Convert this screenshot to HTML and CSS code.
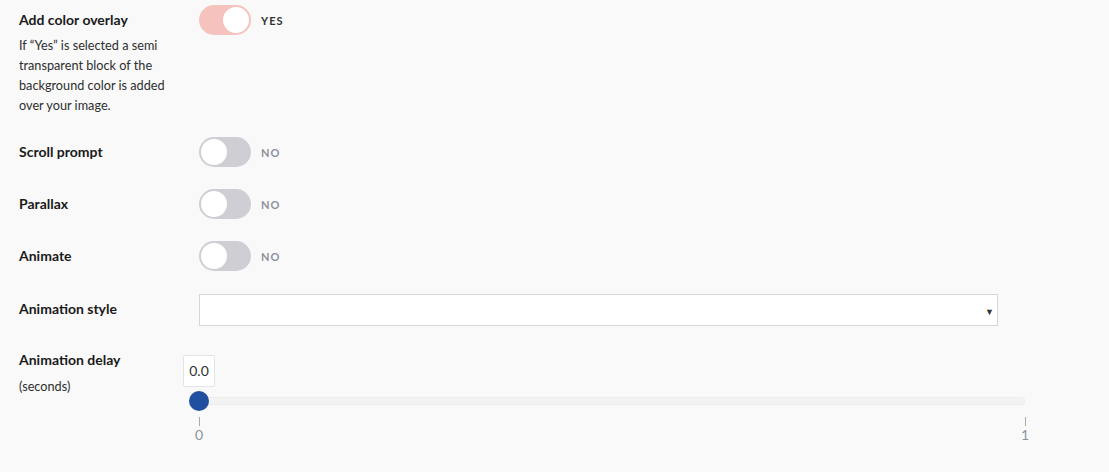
FILE: index.html
```html
<!DOCTYPE html>
<html>
<head>
<meta charset="utf-8">
<link rel="stylesheet" href="styles.css">
</head>
<body>
<div class="form">
  <div class="row row-first">
    <div class="label">
      <div class="title">Add color overlay</div>
      <div class="desc">If “Yes” is selected a semi transparent block of the background color is added over your image.</div>
    </div>
    <div class="control">
      <span class="toggle on"><span class="knob"></span></span>
      <span class="state state-on">YES</span>
    </div>
  </div>
  <div class="row">
    <div class="label"><div class="title">Scroll prompt</div></div>
    <div class="control">
      <span class="toggle"><span class="knob"></span></span>
      <span class="state">NO</span>
    </div>
  </div>
  <div class="row">
    <div class="label"><div class="title">Parallax</div></div>
    <div class="control">
      <span class="toggle"><span class="knob"></span></span>
      <span class="state">NO</span>
    </div>
  </div>
  <div class="row">
    <div class="label"><div class="title">Animate</div></div>
    <div class="control">
      <span class="toggle"><span class="knob"></span></span>
      <span class="state">NO</span>
    </div>
  </div>
  <div class="row row-select">
    <div class="label"><div class="title">Animation style</div></div>
    <div class="control">
      <div class="select"><span class="arrow">▼</span></div>
    </div>
  </div>
  <div class="row row-slider">
    <div class="label">
      <div class="title">Animation delay</div>
      <div class="sub">(seconds)</div>
    </div>
    <div class="control slider-col">
      <div class="slider">
        <div class="track"></div>
        <div class="bubble">0.0</div>
        <div class="handle"></div>
      </div>
      <div class="ticks">
        <div class="tick"><span class="tick-line"></span><span class="tick-label">0</span></div>
        <div class="tick"><span class="tick-line"></span><span class="tick-label">1</span></div>
      </div>
    </div>
  </div>
</div>
</body>
</html>
```

FILE: styles.css
```css
html, body {
  margin: 0;
  padding: 0;
  background: #f9f9f9;
  font-family: Lato, "Liberation Sans", sans-serif;
  color: #1c1c1c;
}
body {
  width: 1109px;
  height: 472px;
  overflow: hidden;
}
.form {
  padding: 5px 0 0 19px;
}
.row {
  display: flex;
  align-items: flex-start;
  margin-top: 22px;
}
.row-first {
  margin-top: 0;
}
.label {
  width: 180px;
  flex: none;
}
.title {
  font-size: 14px;
  font-weight: 700;
  line-height: 30px;
  color: #1a1a1a;
}
.desc {
  font-size: 12.7px;
  line-height: 20px;
  color: #2e2e2e;
  width: 160px;
}
.sub {
  font-size: 12.7px;
  line-height: 22px;
  color: #2e2e2e;
}
.control {
  display: flex;
  align-items: center;
  height: 30px;
}
.toggle {
  width: 52px;
  height: 30px;
  border-radius: 15px;
  background: #cfced5;
  position: relative;
  display: block;
}
.toggle .knob {
  position: absolute;
  top: 2px;
  left: 2px;
  width: 26px;
  height: 26px;
  border-radius: 50%;
  background: #fff;
}
.toggle.on {
  background: #f5c2bd;
}
.toggle.on .knob {
  left: 24px;
}
.state {
  margin-left: 10px;
  font-size: 11px;
  font-weight: 700;
  letter-spacing: 1px;
  color: #8d909b;
}
.state-on {
  color: #333;
}
.row-select {
  margin-top: 23px;
}
.row-select .control {
  height: 32px;
}
.row-select .label .title {
  line-height: 29px;
}
.select {
  width: 797px;
  height: 30px;
  background: #fff;
  border: 1px solid #d6d6d6;
  display: flex;
  align-items: center;
  justify-content: flex-end;
}
.arrow {
  font-size: 9px;
  color: #333;
  margin-right: 3px;
  margin-top: 2px;
}
.row-slider {
  margin-top: 19px;
}
.slider-col {
  display: block;
  height: auto;
  width: 826px;
}
.slider {
  position: relative;
  height: 62px;
}
.track {
  position: absolute;
  left: 0;
  right: 0;
  top: 52px;
  height: 8px;
  border-radius: 4px;
  background: #f3f3f3;
  box-shadow: inset 0 0 0 1px #ececec;
}
.bubble {
  position: absolute;
  left: -16px;
  top: 10px;
  width: 30px;
  height: 30px;
  border: 1px solid #e4e4e4;
  border-radius: 2px;
  background: #fff;
  font-size: 14px;
  line-height: 30px;
  text-align: center;
  color: #333;
}
.handle {
  position: absolute;
  left: -10px;
  top: 46px;
  width: 20px;
  height: 20px;
  border-radius: 50%;
  background: #214fa0;
}
.ticks {
  display: flex;
  justify-content: space-between;
  margin-top: 10px;
  margin-left: -10px;
  margin-right: -10px;
}
.tick {
  width: 20px;
  display: flex;
  flex-direction: column;
  align-items: center;
}
.tick-line {
  width: 1px;
  height: 9px;
  background: #aaaaaa;
}
.tick-label {
  font-size: 14px;
  line-height: 18px;
  color: #8d93a3;
}
```
